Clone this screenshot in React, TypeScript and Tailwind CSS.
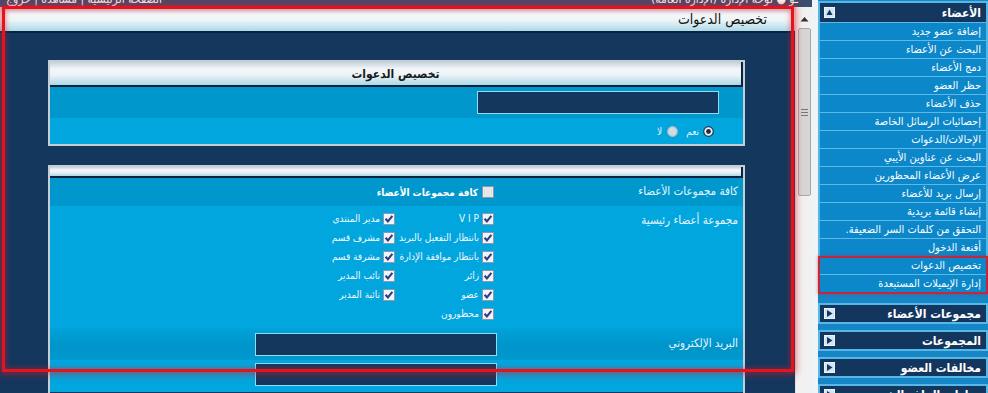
import React from 'react';

const CheckBox = ({ checked = true }: { checked?: boolean }) => (
  <svg width="12" height="12" viewBox="0 0 12 12" className="shrink-0">
    <rect x="0.5" y="0.5" width="11" height="11" fill={checked ? '#f2f3f6' : '#e4e6ea'} stroke="#8d98a8" />
    {checked && <path d="M2.6 5.8 L4.9 8.4 L9.4 2.8" fill="none" stroke="#2c3d88" strokeWidth="2.1" />}
  </svg>
);

const Radio = ({ on = false }: { on?: boolean }) => (
  <svg width="11" height="11" viewBox="0 0 11 11" className="shrink-0">
    <circle cx="5.5" cy="5.5" r="4.8" fill={on ? '#eef2f5' : '#d3dbe2'} stroke={on ? '#27374f' : '#aebdc8'} strokeWidth="1.2" />
    {on && <circle cx="5.5" cy="5.5" r="2.4" fill="#1d2d48" />}
  </svg>
);

const ArrowBox = ({ dir }: { dir: 'up' | 'right' }) => (
  <svg width="11" height="11" viewBox="0 0 11 11" className="shrink-0">
    <rect x="0" y="0" width="11" height="11" fill="#cfe6f3" stroke="#ffffff" />
    {dir === 'up' ? <path d="M2.5 8 L5.5 2.5 L8.5 8 Z" fill="#143660" /> : <path d="M3 2 L8.5 5.5 L3 9 Z" fill="#143660" />}
  </svg>
);

const Field = () => <div className="w-[242px] h-[23px] bg-[#14375e] border border-[#8fdcf5]" />;

const headGrad = 'bg-[linear-gradient(to_bottom,#c3d2dc_0%,#f3f6f8_30%,#eef4f7_55%,#acd9e8_100%)]';

const menuItems = [
  'إضافة عضو جديد',
  'البحث عن الأعضاء',
  'دمج الأعضاء',
  'حظر العضو',
  'حذف الأعضاء',
  'إحصائيات الرسائل الخاصة',
  'الإحالات/الدعوات',
  'البحث عن عناوين الأيبي',
  'عرض الأعضاء المحظورين',
  'إرسال بريد للأعضاء',
  'إنشاء قائمة بريدية',
  'التحقق من كلمات السر الضعيفة.',
  'أقنعة الدخول',
  'تخصيص الدعوات',
  'إدارة الإيميلات المستبعدة',
];

const sections = ['مجموعات الأعضاء', 'المجموعات', 'مخالفات العضو', 'خيارات الملف الشخصي'];

const groupsA = ['V I P', 'بانتظار التفعيل بالبريد', 'بانتظار موافقة الإدارة', 'زائر', 'عضو', 'محظورون'];
const groupsB = ['مدير المنتدى', 'مشرف قسم', 'مشرفة قسم', 'نائب المدير', 'نائبة المدير'];

export default function App() {
  return (
    <div
      className="relative w-[988px] h-[393px] overflow-hidden flex bg-[#eef3f7]"
      style={{ fontFamily: '"DejaVu Sans Condensed", "DejaVu Sans", sans-serif' }}
    >
      {/* left: admin frame */}
      <div className="w-[812px] flex flex-col">
        <div className="h-[7px] bg-[#3c4e6f] overflow-hidden flex justify-between text-white text-[12px] leading-[14px]" dir="rtl">
          <div className="-mt-[8px] pr-[14px]">ـو ● لوحة الإدارة (الإدارة العامة)</div>
          <div className="-mt-[8px] pl-[6px]">الصفحة الرئيسية | مشاهدة | خروج</div>
        </div>
        <div className="flex flex-1 min-h-0">
          <div className="w-[795px] bg-[#14375e] flex flex-col" dir="rtl">
            <div className={`h-[26px] shrink-0 ${headGrad} border-b-2 border-[#0a2240] flex items-center pr-[28px] text-[14px] text-[#111]`}>
              تخصيص الدعوات
            </div>

            {/* panel 1 */}
            <div className="mt-[27px] ml-[48px] mr-[50px] border-2 border-[#c5ced6]">
              <div className={`h-[25px] ${headGrad} border-b-2 border-r-2 border-[#0a2240] flex items-center justify-center text-[12px] font-bold text-[#1a1a1a]`}>
                تخصيص الدعوات
              </div>
              <div className="h-[31px] bg-[#0097cd] flex items-center pr-[24px]">
                <Field />
              </div>
              <div className="h-[26px] bg-[#00a6dd] flex items-center pr-[29px] text-[10px] text-[#e6f6ff]">
                <Radio on />
                <span className="mr-[4px] ml-[8px]">نعم</span>
                <Radio />
                <span className="mr-[5px]">لا</span>
              </div>
            </div>

            {/* panel 2 */}
            <div className="mt-[19px] ml-[48px] mr-[50px] border-2 border-b-0 border-[#c5ced6] flex-1">
              <div className={`h-[11px] ${headGrad} border-b-2 border-r-2 border-[#0a2240]`} />
              <div className="h-[28px] bg-[#0097cd] flex items-center text-[11.5px] text-[#eaf7ff]">
                <div className="w-[244px] pr-[5px]">كافة مجموعات الأعضاء</div>
                <div className="flex items-center gap-[4px] pr-[5px]">
                  <CheckBox checked={false} />
                  <span className="font-bold text-[10px] text-white">كافة مجموعات الأعضاء</span>
                </div>
              </div>
              <div className="h-[122px] bg-[#00a6dd] flex text-[11.5px] text-[#eaf7ff]">
                <div className="w-[244px] pr-[5px] pt-[6px]">مجموعة أعضاء رئيسية</div>
                <div className="flex pr-[5px] pt-[7px] text-[10px] text-[#f2f9ff]">
                  <div className="w-[99px] flex flex-col">
                    {groupsA.map((g) => (
                      <div key={g} className="h-[19px] flex items-start gap-[3px] whitespace-nowrap">
                        <CheckBox />
                        <span className="leading-[12px]">{g}</span>
                      </div>
                    ))}
                  </div>
                  <div className="flex flex-col">
                    {groupsB.map((g) => (
                      <div key={g} className="h-[19px] flex items-start gap-[3px] whitespace-nowrap">
                        <CheckBox />
                        <span className="leading-[12px]">{g}</span>
                      </div>
                    ))}
                  </div>
                </div>
              </div>
              <div className="h-[32px] bg-[linear-gradient(to_bottom,#00a3da_0%,#0094ca_55%,#0099cf_100%)] flex items-center text-[11.5px] text-[#eaf7ff]">
                <div className="w-[244px] pr-[5px]">البريد الإلكتروني</div>
                <div className="pr-[2px]">
                  <Field />
                </div>
              </div>
              <div className="h-[32px] bg-[#00a6dd] flex pt-[3px]">
                <div className="w-[244px]" />
                <div className="pr-[2px]">
                  <Field />
                </div>
              </div>
            </div>
          </div>

          {/* scrollbar */}
          <div className="w-[17px] bg-[#f1f1f1] border-l border-[#e2e2e2] flex flex-col items-center pt-[5px]">
            <svg width="9" height="6" viewBox="0 0 9 6" className="mt-[4px]">
              <path d="M0.5 5.5 L4.5 1 L8.5 5.5 Z" fill="#333" />
            </svg>
            <div className="mt-[6px] w-[13px] h-[168px] bg-[#d6d6d6] border border-[#a9a9a9] rounded-[2px] flex flex-col items-center justify-center gap-[2px]">
              <div className="w-[7px] h-px bg-[#777]" />
              <div className="w-[7px] h-px bg-[#777]" />
              <div className="w-[7px] h-px bg-[#777]" />
            </div>
          </div>
        </div>
      </div>

      <div className="w-[6px] bg-[#eef3f7]" />

      {/* right: sidebar */}
      <div className="w-[170px] bg-[#1786c6] flex flex-col text-white" dir="rtl">
        <div className="mt-[1px] border-2 border-[#55b7e6] bg-[#0c87c9]">
          <div className="h-[19px] bg-[#14375f] flex items-center justify-between pr-[5px] pl-[4px] text-[12px] font-bold">
            <span>الأعضاء</span>
            <ArrowBox dir="up" />
          </div>
          {menuItems.map((m) => (
            <div key={m} className="h-[18px] border-t border-[#5ab9e6] pr-[5px] text-[11px] leading-[17px] whitespace-nowrap overflow-hidden">
              {m}
            </div>
          ))}
        </div>
        <div className="mt-[9px] flex flex-col gap-[6px]">
          {sections.map((s) => (
            <div key={s} className="h-[21px] shrink-0 border-2 border-[#56b8e6] bg-[#13365e] flex items-center justify-between pr-[5px] pl-[4px] text-[12px] font-bold">
              <span>{s}</span>
              <ArrowBox dir="right" />
            </div>
          ))}
        </div>
      </div>

      {/* annotation highlights */}
      <div className="absolute left-[2px] top-[6px] w-[792px] h-[366px] border-[3px] border-[#e3141e] shadow-[0_0_7px_2px_rgba(235,20,30,0.55),inset_0_0_5px_1px_rgba(235,20,30,0.45)] pointer-events-none" />
      <div className="absolute left-[818px] top-[256px] w-[170px] h-[38px] border-2 border-[#c4273a] shadow-[0_0_3px_rgba(200,30,50,0.6)] pointer-events-none" />
    </div>
  );
}
